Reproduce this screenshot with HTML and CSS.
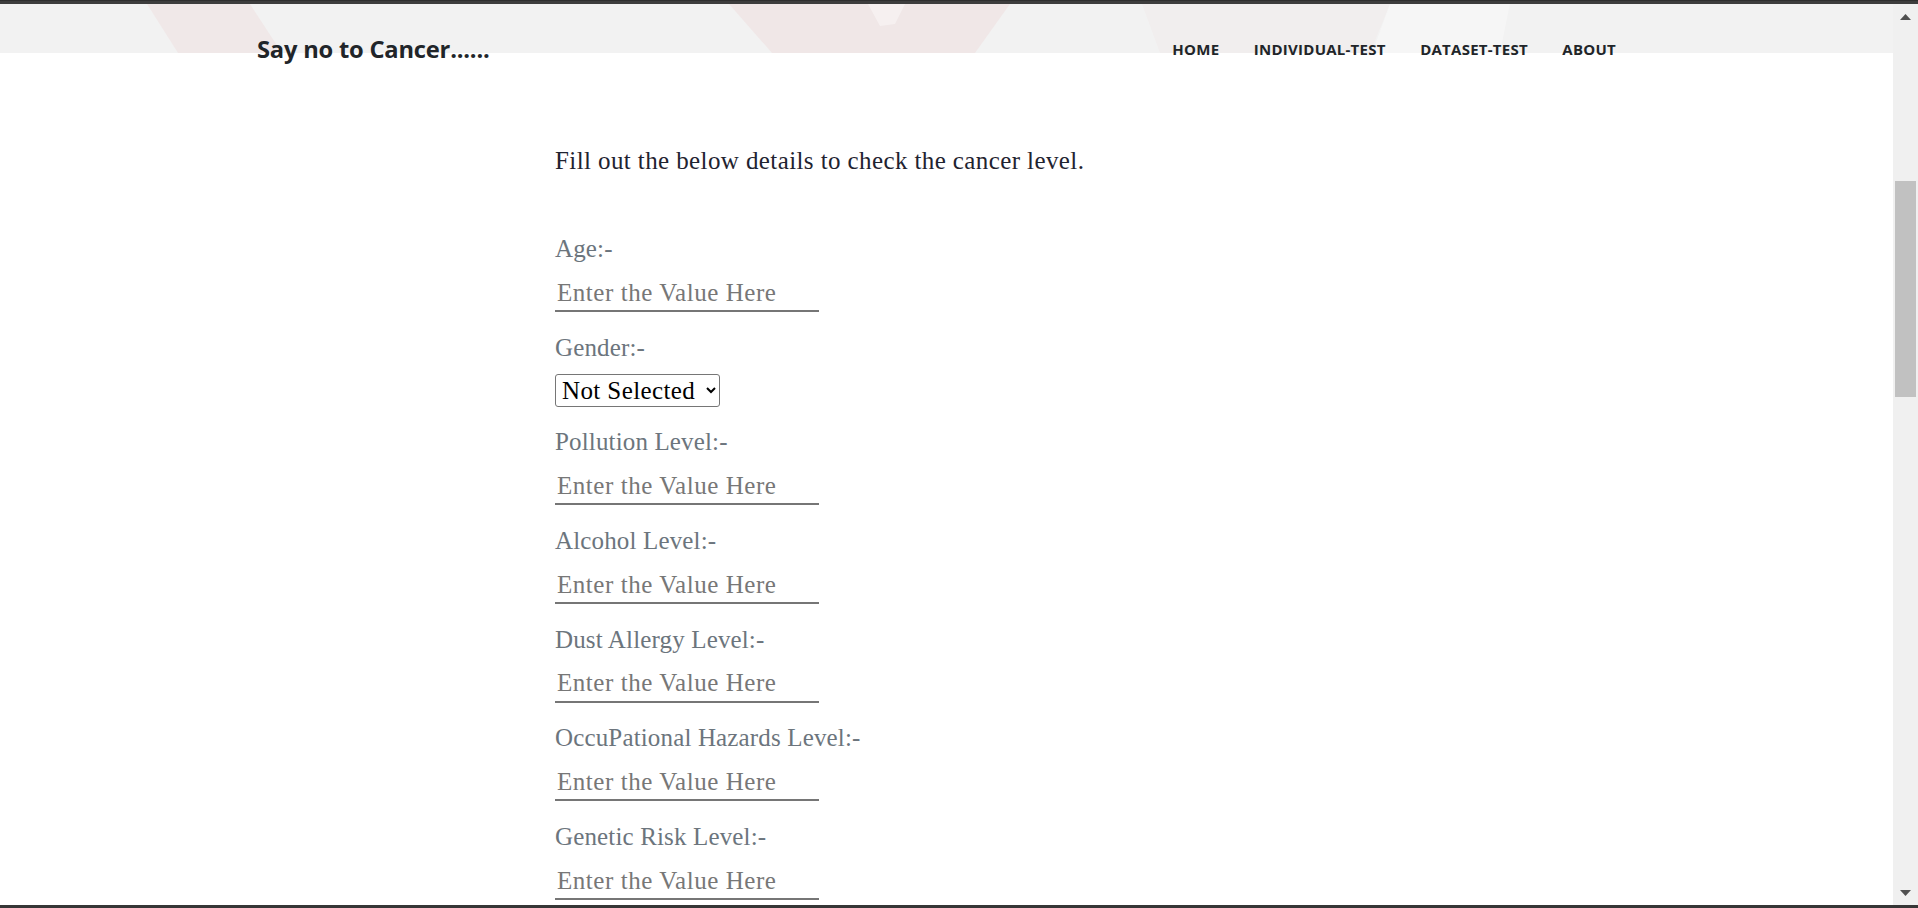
FILE: index.html
```html
<!DOCTYPE html>
<html lang="en">
<head>
<meta charset="utf-8">
<title>Say no to Cancer</title>
<link rel="stylesheet" href="styles.css">
</head>
<body>
<div class="frame-top"></div>
<div class="window">
  <div class="page">
    <header class="site-header">
      <svg class="hero-art" viewBox="0 0 1893 49" preserveAspectRatio="none" aria-hidden="true">
        <rect x="0" y="0" width="1893" height="49" fill="#f2f2f2"/>
        <polygon points="147,0 250,0 282,49 178,49" fill="#e24b4b" fill-opacity="0.055"/>
        <polygon points="729,0 1010,0 975,49 772,49" fill="#e24b4b" fill-opacity="0.06"/>
        <polygon points="868,0 905,0 895,20 880,22" fill="#ffffff" fill-opacity="0.4"/>
        <polygon points="1142,0 1390,0 1370,49 1160,49" fill="#e24b4b" fill-opacity="0.02"/>
        <polygon points="1390,0 1510,0 1500,49 1372,49" fill="#ffffff" fill-opacity="0.3"/>
      </svg>
      <div class="nav-row">
        <a class="brand" href="#">Say no to Cancer......</a>
        <nav class="menu">
          <a href="#">HOME</a>
          <a href="#">INDIVIDUAL-TEST</a>
          <a href="#">DATASET-TEST</a>
          <a href="#">ABOUT</a>
        </nav>
      </div>
    </header>
    <main class="content">
      <p class="intro">Fill out the below details to check the cancer level.</p>
      <form class="form">
        <div class="field">
          <label>Age:-</label>
          <input type="text" placeholder="Enter the Value Here">
        </div>
        <div class="field">
          <label>Gender:-</label>
          <select>
            <option>Not Selected</option>
            <option>Male</option>
            <option>Female</option>
          </select>
        </div>
        <div class="field">
          <label>Pollution Level:-</label>
          <input type="text" placeholder="Enter the Value Here">
        </div>
        <div class="field">
          <label>Alcohol Level:-</label>
          <input type="text" placeholder="Enter the Value Here">
        </div>
        <div class="field">
          <label>Dust Allergy Level:-</label>
          <input type="text" placeholder="Enter the Value Here">
        </div>
        <div class="field">
          <label>OccuPational Hazards Level:-</label>
          <input type="text" placeholder="Enter the Value Here">
        </div>
        <div class="field">
          <label>Genetic Risk Level:-</label>
          <input type="text" placeholder="Enter the Value Here">
        </div>
      </form>
    </main>
  </div>
  <div class="scrollbar" aria-hidden="true">
    <div class="sb-btn">
      <svg width="11" height="6" viewBox="0 0 11 6"><polygon points="5.5,0 11,6 0,6" fill="#505050"/></svg>
    </div>
    <div class="sb-track"><div class="sb-thumb"></div></div>
    <div class="sb-btn">
      <svg width="11" height="6" viewBox="0 0 11 6"><polygon points="0,0 11,0 5.5,6" fill="#505050"/></svg>
    </div>
  </div>
</div>
<div class="frame-bottom"></div>
</body>
</html>
```

FILE: styles.css
```css
html, body {
  margin: 0;
  padding: 0;
  height: 100%;
}

body {
  display: flex;
  flex-direction: column;
  height: 908px;
  overflow: hidden;
  background: #ffffff;
  font-family: "Liberation Serif", "Times New Roman", serif;
}

.frame-top {
  height: 4px;
  background: #3d3d3d;
  border-top: 1px solid #2e2e2e;
  box-sizing: border-box;
  flex: none;
}

.frame-bottom {
  height: 3px;
  background: #363636;
  flex: none;
}

.window {
  flex: 1;
  display: flex;
  min-height: 0;
}

.page {
  flex: 1;
  overflow: hidden;
  background: #ffffff;
}

.site-header {
  position: relative;
}

.hero-art {
  position: absolute;
  top: 0;
  left: 0;
  width: 100%;
  height: 49px;
  display: block;
}

.nav-row {
  position: relative;
  width: 1379px;
  margin: 0 auto;
  padding-top: 20px;
  height: 50px;
  display: flex;
  align-items: center;
  justify-content: space-between;
}

.brand {
  font-family: "Open Sans", "Liberation Sans", sans-serif;
  font-weight: 700;
  font-size: 23.7px;
  letter-spacing: -0.2px;
  color: #212529;
  text-decoration: none;
}

.menu {
  display: flex;
  gap: 34.5px;
  margin-right: 20px;
}

.menu a {
  font-family: "Open Sans", "Liberation Sans", sans-serif;
  font-weight: 700;
  font-size: 15px;
  letter-spacing: 0.25px;
  color: #212529;
  text-decoration: none;
}

.content {
  width: 783px;
  margin: 0 auto;
  padding-top: 72px;
}

.intro {
  margin: 0 0 58px;
  font-size: 25px;
  letter-spacing: 0.4px;
  line-height: 30px;
  color: #1f2330;
}

.form {
  margin: 0;
}

.field {
  margin-bottom: 20.7px;
}

.field label {
  display: block;
  font-size: 25px;
  letter-spacing: 0.15px;
  line-height: 30px;
  margin-bottom: 11px;
  color: #6c757d;
}

.field input {
  display: block;
  box-sizing: border-box;
  width: 264px;
  height: 37px;
  padding: 1px 2px;
  border: 0;
  border-bottom: 2px solid #767676;
  background: transparent;
  font-family: "Liberation Serif", "Times New Roman", serif;
  font-size: 25px;
  letter-spacing: 0.55px;
  color: #212529;
  outline: none;
}

.field input::placeholder {
  color: #777777;
}

.field select {
  display: block;
  box-sizing: border-box;
  width: 165px;
  height: 33px;
  margin-bottom: 3px;
  padding: 0 2px;
  border: 1px solid #767676;
  border-radius: 3px;
  background: #ffffff;
  font-family: "Liberation Serif", "Times New Roman", serif;
  font-size: 25px;
  letter-spacing: 0.4px;
  color: #000000;
}

.scrollbar {
  width: 25px;
  flex: none;
  background: #f0f0f0;
  display: flex;
  flex-direction: column;
}

.sb-btn {
  height: 25px;
  flex: none;
  display: flex;
  align-items: center;
  justify-content: center;
}

.sb-track {
  flex: 1;
  padding-top: 152px;
}

.sb-thumb {
  height: 216px;
  margin: 0 2px;
  background: #c1c1c1;
}
```
